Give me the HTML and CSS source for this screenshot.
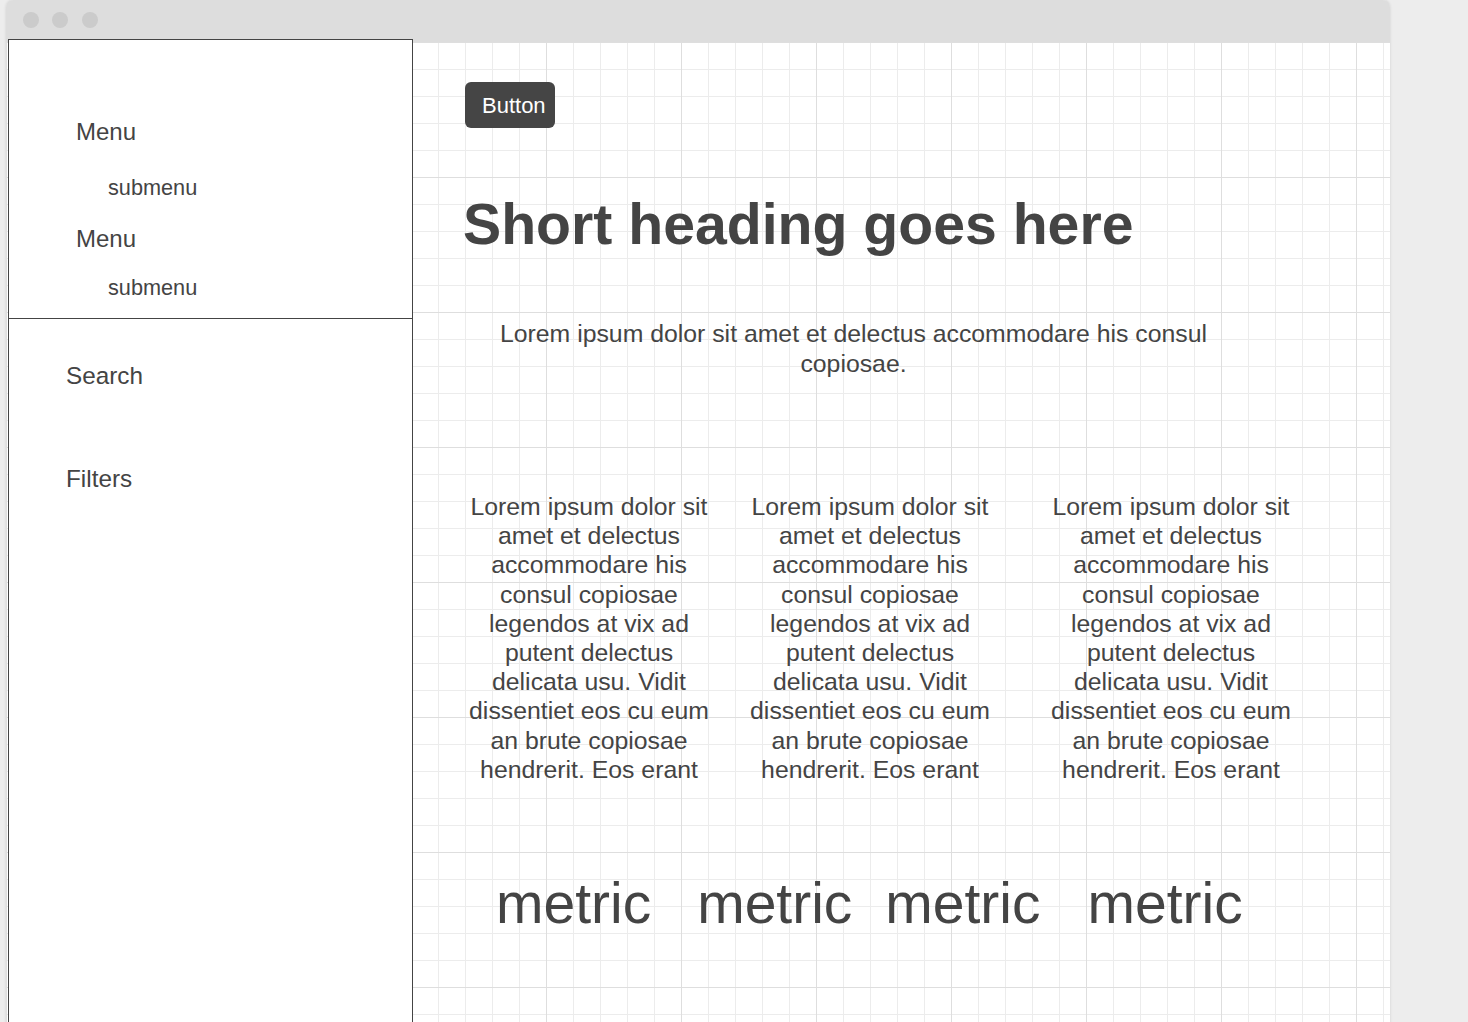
FILE: index.html
```html
<!DOCTYPE html>
<html lang="en">
<head>
<meta charset="utf-8">
<title>Wireframe</title>
<link rel="stylesheet" href="styles.css">
</head>
<body>
<div class="window">
  <div class="titlebar">
    <span class="dot"></span>
    <span class="dot"></span>
    <span class="dot"></span>
  </div>
  <div class="window-body">
    <aside class="sidebar">
      <nav class="nav-section">
        <div class="menu first">Menu</div>
        <div class="submenu sub1">submenu</div>
        <div class="menu second">Menu</div>
        <div class="submenu sub2">submenu</div>
      </nav>
      <div class="tools-section">
        <div class="tool search">Search</div>
        <div class="tool filters">Filters</div>
      </div>
    </aside>
    <main class="main">
      <button class="btn" type="button">Button</button>
      <h1 class="heading">Short heading goes here</h1>
      <p class="lead">Lorem ipsum dolor sit amet et delectus accommodare his consul copiosae.</p>
      <div class="columns">
        <p class="col col-1">Lorem ipsum dolor sit amet et delectus accommodare his consul copiosae legendos at vix ad putent delectus delicata usu. Vidit dissentiet eos cu eum an brute copiosae hendrerit. Eos erant</p>
        <p class="col col-2">Lorem ipsum dolor sit amet et delectus accommodare his consul copiosae legendos at vix ad putent delectus delicata usu. Vidit dissentiet eos cu eum an brute copiosae hendrerit. Eos erant</p>
        <p class="col col-3">Lorem ipsum dolor sit amet et delectus accommodare his consul copiosae legendos at vix ad putent delectus delicata usu. Vidit dissentiet eos cu eum an brute copiosae hendrerit. Eos erant</p>
      </div>
      <div class="metrics">
        <span class="metric m1">metric</span>
        <span class="metric m2">metric</span>
        <span class="metric m3">metric</span>
        <span class="metric m4">metric</span>
      </div>
    </main>
  </div>
</div>
</body>
</html>
```
FILE: styles.css
```css
html, body {
  margin: 0;
  padding: 0;
  overflow: hidden;
}

body {
  background: #ededed;
  font-family: "Liberation Sans", Arial, sans-serif;
  color: #444444;
}

.window {
  margin-left: 6px;
  width: 1384px;
  box-shadow: 0 0 3px rgba(0, 0, 0, 0.12);
  border-radius: 7px 7px 0 0;
}

.titlebar {
  height: 42px;
  background: #dddddd;
  border-radius: 7px 7px 0 0;
  display: flex;
  align-items: center;
  padding-left: 17px;
  gap: 13px;
  box-sizing: border-box;
}

.dot {
  width: 16px;
  height: 16px;
  border-radius: 50%;
  background: #cbcbcb;
  margin-top: -2px;
}

.dot:nth-child(3) {
  margin-left: 1px;
}

.window-body {
  display: flex;
  height: 1000px;
  background-color: #ffffff;
  background-image:
    linear-gradient(to right, #dedede 1px, transparent 1px),
    linear-gradient(to bottom, #dedede 1px, transparent 1px),
    linear-gradient(to right, #ececec 1px, transparent 1px),
    linear-gradient(to bottom, #ececec 1px, transparent 1px);
  background-size: 135px 135px, 135px 135px, 27px 27px, 27px 27px;
}

/* Sidebar */
.sidebar {
  box-sizing: border-box;
  width: 405px;
  flex: 0 0 405px;
  margin-left: 2px;
  margin-top: -3px;
  border: 1px solid #444444;
  background: #ffffff;
  display: flex;
  flex-direction: column;
}

.nav-section {
  border-bottom: 1px solid #444444;
  padding: 80px 0 20px 0;
}

.menu {
  font-size: 24px;
  line-height: 24px;
  padding-left: 67px;
}

.submenu {
  font-size: 21.7px;
  line-height: 21px;
  padding-left: 99px;
}

.sub1 { margin-top: 33px; }
.second { margin-top: 29px; }
.sub2 { margin-top: 26px; }

.tools-section {
  padding-top: 45px;
}

.tool {
  font-size: 24.3px;
  line-height: 24px;
  padding-left: 57px;
}

.filters { margin-top: 79px; }

/* Main */
.main {
  flex: 1;
  padding: 40px 0 0 51px;
  display: flex;
  flex-direction: column;
  align-items: flex-start;
}

.btn {
  box-sizing: border-box;
  width: 90px;
  height: 46px;
  margin-left: 1px;
  padding: 0 0 0 17px;
  border: none;
  border-radius: 6px;
  background: #454545;
  color: #ffffff;
  font-family: "Liberation Sans", Arial, sans-serif;
  font-size: 22px;
  line-height: 48px;
  text-align: left;
}

.heading {
  margin: 68px 0 0 -1px;
  font-size: 57.2px;
  line-height: 57px;
  font-weight: bold;
  color: #444444;
}

.lead {
  margin: 66px 0 0 0;
  width: 779px;
  font-size: 24.8px;
  line-height: 30px;
  text-align: center;
}

.columns {
  margin-top: 113px;
  display: flex;
}

.col {
  margin: 0;
  width: 250px;
  font-size: 24.8px;
  line-height: 29.2px;
  text-align: center;
}

.col-2 { margin-left: 31px; }
.col-3 { margin-left: 51px; }

.metrics {
  margin-top: 90px;
  display: flex;
}

.metric {
  font-size: 57px;
  line-height: 58px;
}

.m1 { margin-left: 32px; }
.m2 { margin-left: 46px; }
.m3 { margin-left: 33px; }
.m4 { margin-left: 47px; }
```
